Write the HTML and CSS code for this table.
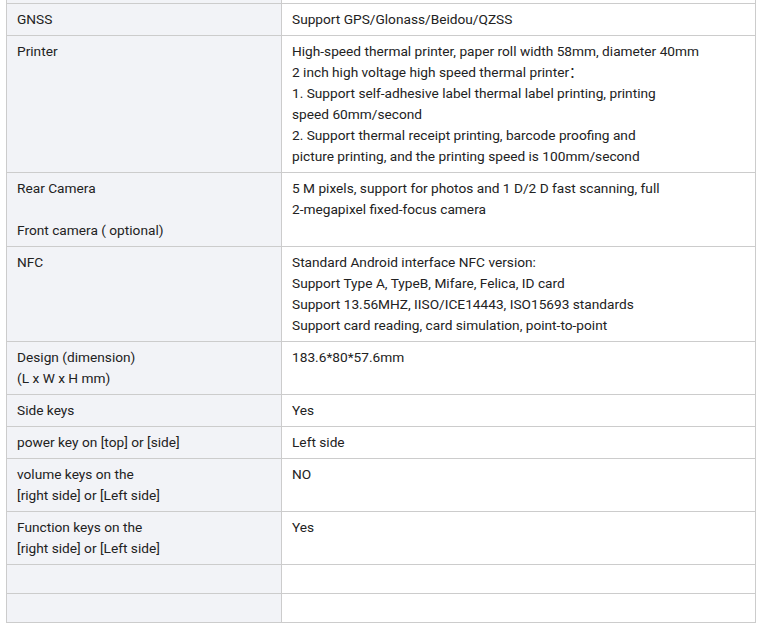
FILE: index.html
```html
<!DOCTYPE html>
<html lang="en">
<head>
  <meta charset="UTF-8" />
  <meta name="viewport" content="width=device-width, initial-scale=1.0"/>
  <title>Specifications</title>
  <link rel="stylesheet" href="styles.css">
</head>
<body>
<div class="specs">
  <table class="spec-table">
    <tr class="cut">
      <td class="key"><div class="blank"></div></td>
      <td class="val"><div class="blank"></div></td>
    </tr>
    <tr>
      <td class="key">GNSS</td>
      <td class="val">Support GPS/Glonass/Beidou/QZSS</td>
    </tr>
    <tr>
      <td class="key">Printer</td>
      <td class="val">High-speed thermal printer, paper roll width 58mm, diameter 40mm<br>
        2 inch high voltage high speed thermal printer：<br>
        1. Support self-adhesive label thermal label printing, printing<br>
        speed 60mm/second<br>
        2. Support thermal receipt printing, barcode proofing and<br>
        picture printing, and the printing speed is 100mm/second</td>
    </tr>
    <tr>
      <td class="key">Rear Camera<br><br>Front camera ( optional)</td>
      <td class="val">5 M pixels, support for photos and 1 D/2 D fast scanning, full<br>
        2-megapixel fixed-focus camera</td>
    </tr>
    <tr>
      <td class="key">NFC</td>
      <td class="val">Standard Android interface NFC version:<br>
        Support Type A, TypeB, Mifare, Felica, ID card<br>
        Support 13.56MHZ, IISO/ICE14443, ISO15693 standards<br>
        Support card reading, card simulation, point-to-point</td>
    </tr>
    <tr>
      <td class="key">Design (dimension)<br>(L x W x H mm)</td>
      <td class="val">183.6*80*57.6mm</td>
    </tr>
    <tr>
      <td class="key">Side keys</td>
      <td class="val">Yes</td>
    </tr>
    <tr>
      <td class="key">power key on [top] or [side]</td>
      <td class="val">Left side</td>
    </tr>
    <tr>
      <td class="key">volume keys on the<br>[right side] or [Left side]</td>
      <td class="val">NO</td>
    </tr>
    <tr>
      <td class="key">Function keys on the<br>[right side] or [Left side]</td>
      <td class="val">Yes</td>
    </tr>
    <tr class="empty">
      <td class="key"><div class="blank"></div></td>
      <td class="val"><div class="blank"></div></td>
    </tr>
    <tr class="empty">
      <td class="key"><div class="blank"></div></td>
      <td class="val"><div class="blank"></div></td>
    </tr>
  </table>
</div>
</body>
</html>
```

FILE: styles.css
```css
body {
  margin: 0;
  background: #fff;
  font-family: Roboto, 'Liberation Sans', 'Noto Sans CJK SC', sans-serif;
  font-size: 13.7px;
  line-height: 21px;
  color: #222;
}
.specs {
  padding: 0 4px 0 6px;
  height: 631px;
  overflow: hidden;
}
.spec-table {
  width: 750px;
  border-collapse: collapse;
  margin-top: -26px;
}
.spec-table td {
  border: 1px solid #ccc;
  padding: 5px 10px;
  vertical-align: top;
  text-align: left;
}
.key {
  width: 254px;
  background: #f2f3f7;
}
.val {
  background: #fff;
}
.blank {
  height: 18px;
}
```
